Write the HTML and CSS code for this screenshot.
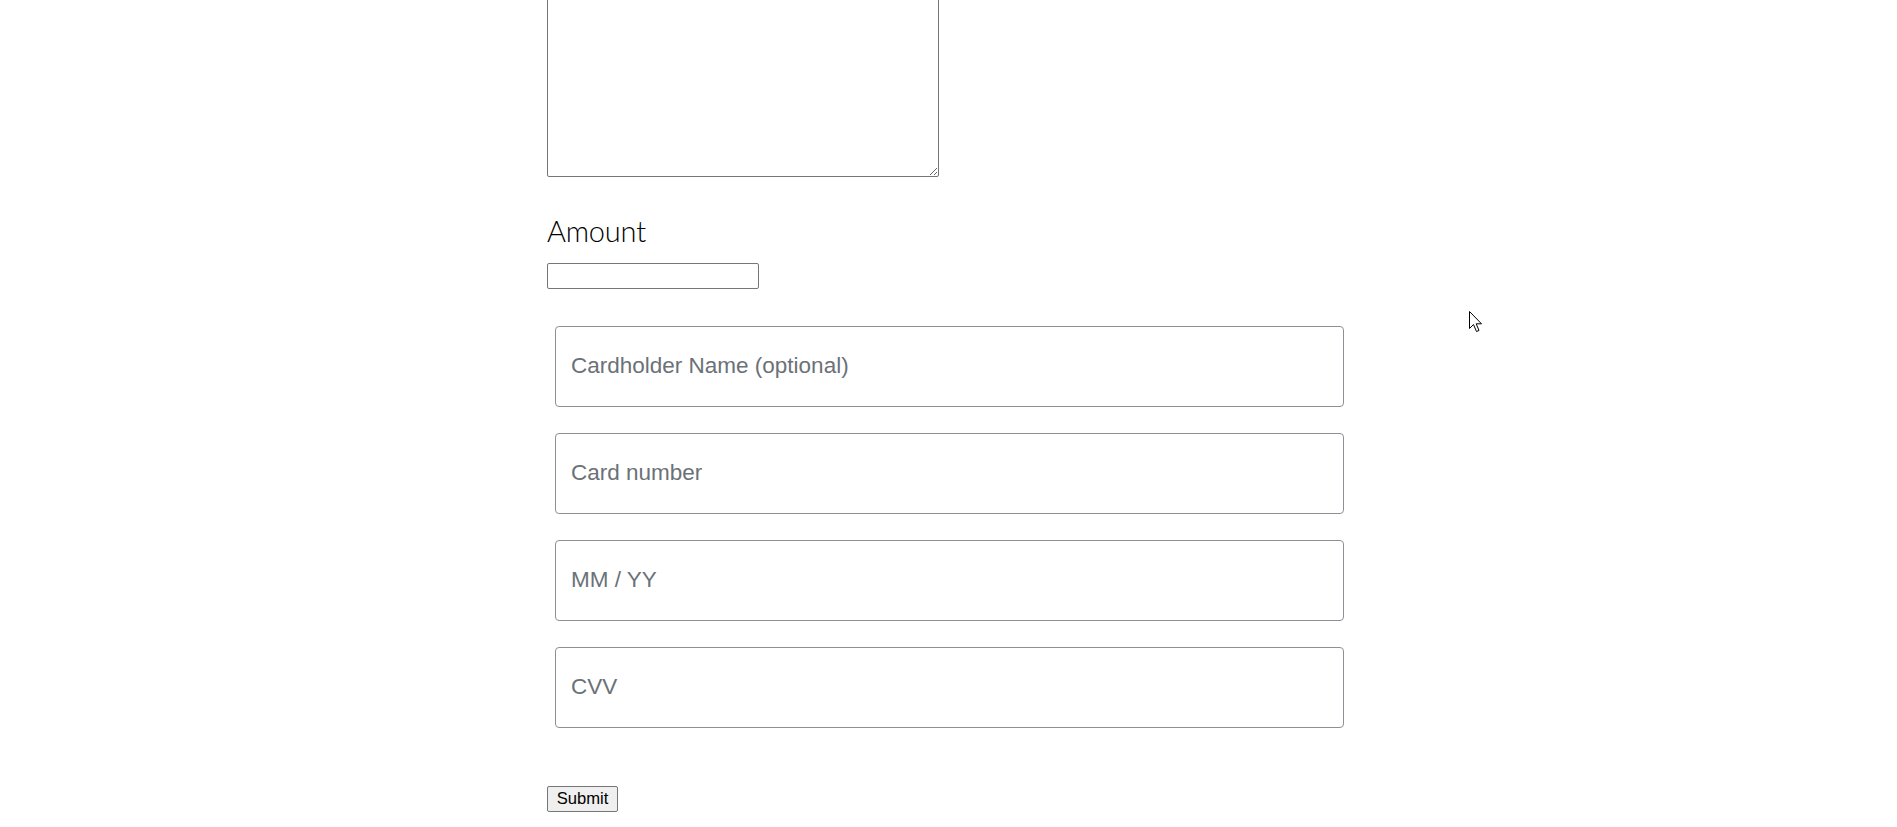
FILE: index.html
```html
<!DOCTYPE html>
<html>
<head>
<meta charset="utf-8">
<link rel="stylesheet" href="styles.css">
</head>
<body>
<form class="form">
  <textarea class="notes"></textarea>
  <label class="label" for="amount">Amount</label>
  <input class="amount" id="amount" type="text">
  <div class="card-fields">
    <div class="card-field"><span class="ph">Cardholder Name (optional)</span></div>
    <div class="card-field"><span class="ph">Card number</span></div>
    <div class="card-field"><span class="ph">MM / YY</span></div>
    <div class="card-field"><span class="ph">CVV</span></div>
  </div>
  <button class="submit" type="button">Submit</button>
</form>
<svg class="cursor" width="16" height="24" viewBox="0 0 16 24">
  <path d="M1.5 1.5 L1.5 18.5 L5.5 14.5 L8.5 21.5 L11 20.5 L8.2 13.8 L13.5 13.8 Z" fill="#fff" stroke="#000" stroke-width="1" stroke-linejoin="round"/>
</svg>
</body>
</html>
```
FILE: styles.css
```css
html, body {
  margin: 0;
  padding: 0;
  background: #ffffff;
  overflow: hidden;
}
body {
  width: 1897px;
  height: 827px;
  position: relative;
  font-family: "Liberation Sans", Arial, sans-serif;
}
.form {
  width: 803px;
  margin: 0 auto;
  display: flex;
  flex-direction: column;
  align-items: flex-start;
}
.notes {
  box-sizing: border-box;
  width: 392px;
  height: 240px;
  margin-top: -63px;
  border: 1px solid #767676;
  border-radius: 2px;
  resize: both;
  display: block;
  background: #fff;
}
.label {
  font-family: Lato, "Open Sans", sans-serif;
  font-weight: 300;
  font-size: 29px;
  line-height: 34px;
  color: #000;
  margin-top: 37px;
  height: 34px;
  letter-spacing: -0.2px;
}
.amount {
  box-sizing: border-box;
  width: 212px;
  height: 26px;
  margin-top: 15px;
  border: 1px solid #767676;
  border-radius: 2px;
  padding: 1px 3px;
  font-size: 16.6px;
  font-family: "Liberation Sans", Arial, sans-serif;
}
.card-fields {
  margin-top: 37px;
  margin-left: 8px;
  display: flex;
  flex-direction: column;
  gap: 26px;
}
.card-field {
  box-sizing: border-box;
  width: 789px;
  height: 81px;
  border: 1px solid #8d9196;
  border-radius: 4px;
  padding: 0 15px;
  display: flex;
  align-items: center;
}
.ph {
  font-family: "Liberation Sans", Arial, sans-serif;
  font-size: 22.5px;
  color: #6b7177;
  margin-top: -1px;
}
.submit {
  box-sizing: border-box;
  margin-top: 58px;
  width: 71px;
  height: 26px;
  padding: 0;
  font-family: "Liberation Sans", Arial, sans-serif;
  font-size: 16.6px;
  color: #000;
  background: #efefef;
  border: 1px solid #767676;
  border-radius: 2px;
}
.cursor {
  position: absolute;
  left: 1468px;
  top: 310px;
}
```
